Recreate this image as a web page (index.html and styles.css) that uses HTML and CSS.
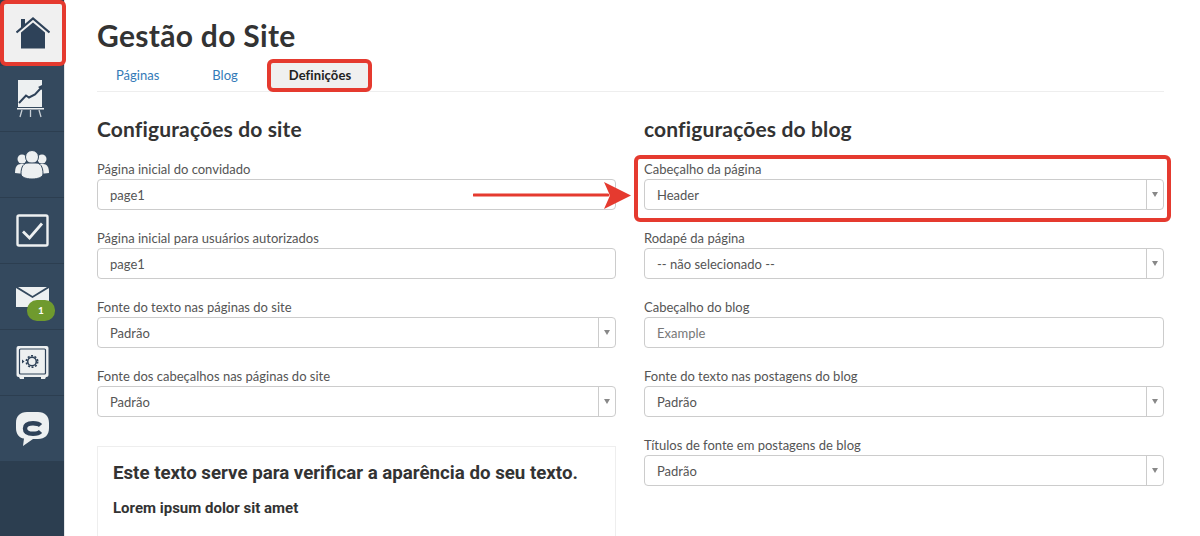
FILE: index.html
```html
<!DOCTYPE html>
<html lang="pt">
<head>
    <meta charset="UTF-8">
    <meta name="viewport" content="width=device-width, initial-scale=1.0">
    <title>Gestão do Site</title>
    <link rel="stylesheet" href="styles.css">
</head>
<body>

    <nav class="sidebar">
        <a class="nav-item nav-home">
            <svg width="34" height="32" viewBox="0 0 34 32">
                <path d="M5 2h4v6l-4 4z" fill="#2e4259"/>
                <path d="M0.5 15.500 17 1.500 33.500 15.500" fill="none" stroke="#2e4259" stroke-width="2.2"/>
                <path d="M5 15.500 17 5.500 29 15.500V31.500H5z" fill="#2e4259"/>
            </svg>
        </a>
        <a class="nav-item">
            <svg width="30" height="38" viewBox="0 0 30 38">
                <rect x="1" y="0" width="24" height="27" fill="#edf0f1"/>
                <path d="M2 23 9 15.500 12 17.500 18 14.500 24 8" fill="none" stroke="#2e4259" stroke-width="2"/>
                <path d="M21 7l4-2v5z" fill="#2e4259"/>
                <rect x="0" y="28" width="27" height="1.500" fill="#edf0f1"/>
                <path d="M5 30 3 37M13.500 30v7M22 30l2 7" stroke="#c9d0d6" stroke-width="1.3"/>
            </svg>
        </a>
        <a class="nav-item">
            <svg width="34" height="30" viewBox="0 0 34 30">
                <circle cx="7" cy="9" r="4.500" fill="#edf0f1"/>
                <circle cx="27" cy="9" r="4.500" fill="#edf0f1"/>
                <path d="M0 23c0-6 2-9 6-9h3v10z" fill="#edf0f1"/>
                <path d="M34 23c0-6-2-9-6-9h-3v10z" fill="#edf0f1"/>
                <circle cx="17" cy="7" r="6.500" fill="#edf0f1" stroke="#34495e"/>
                <path d="M6 24c0-8 3-11 7-11h8c4 0 7 3 7 11 0 3-5 5-11 5S6 27 6 24z" fill="#edf0f1" stroke="#34495e"/>
            </svg>
        </a>
        <a class="nav-item">
            <svg width="33" height="33" viewBox="0 0 33 33">
                <rect x="1.500" y="1.500" width="30" height="30" rx="1.500" fill="none" stroke="#edf0f1" stroke-width="2.4"/>
                <path d="M7 17.500 13.500 24 26 9.500" fill="none" stroke="#edf0f1" stroke-width="2.8"/>
            </svg>
        </a>
        <a class="nav-item">
            <svg width="33" height="20" viewBox="0 0 33 20">
                <path d="M0 1 16.500 11 33 1v19H0z" fill="#edf0f1"/>
                <path d="M2 0h29L16.500 9z" fill="#edf0f1"/>
            </svg>
            <span class="badge">1</span>
        </a>
        <a class="nav-item">
            <svg width="33" height="33" viewBox="0 0 33 33">
                <rect x="0.500" y="0" width="32" height="31" rx="2" fill="#edf0f1"/>
                <rect x="3.500" y="3" width="26" height="25" rx="1" fill="#edf0f1" stroke="#2e4259" stroke-width="1.2"/>
                <circle cx="16" cy="15.500" r="4.300" fill="none" stroke="#2e4259" stroke-width="1.6"/>
                <circle cx="16" cy="15.500" r="5.700" fill="none" stroke="#2e4259" stroke-width="1.6" stroke-dasharray="2 1.600"/>
                <path d="M6 13.500v4l2.500-2z" fill="#2e4259"/>
                <path d="M3 31h5v2H4zM25 31h5l-1 2h-4z" fill="#edf0f1"/>
            </svg>
        </a>
        <a class="nav-item">
            <svg width="33" height="34" viewBox="0 0 33 34">
                <path d="M11 0h11c7 0 11 4 11 11v5c0 7-4 11-11 11h-5l-10 7 1-7.500C3 26 0 22 0 16v-5C0 4 4 0 11 0z" fill="#edf0f1"/>
                <path d="M24.500 13.500C23 11.800 20.500 11.200 17 11.200 11.500 11.200 9 13 9 16.500S11.500 21.800 17 21.800C20.500 21.800 23 21.200 24.500 19.500" fill="none" stroke="#2e4259" stroke-width="4.400"/>
            </svg>
        </a>
    </nav>

    <main class="content">
        <h1>Gestão do Site</h1>
        <ul class="tabs">
            <li class="tab">Páginas</li>
            <li class="tab">Blog</li>
            <li class="tab tab-active">Definições</li>
        </ul>

        <div class="columns">
            <section class="column">
                <h2>Configurações do site</h2>
                <div class="field">
                    <label>Página inicial do convidado</label>
                    <div class="input">page1</div>
                </div>
                <div class="field">
                    <label>Página inicial para usuários autorizados</label>
                    <div class="input">page1</div>
                </div>
                <div class="field">
                    <label>Fonte do texto nas páginas do site</label>
                    <div class="input select">Padrão</div>
                </div>
                <div class="field">
                    <label>Fonte dos cabeçalhos nas páginas do site</label>
                    <div class="input select">Padrão</div>
                </div>
                <div class="preview">
                    <h3>Este texto serve para verificar a aparência do seu texto.</h3>
                    <h4>Lorem ipsum dolor sit amet</h4>
                </div>
            </section>

            <section class="column">
                <h2>configurações do blog</h2>
                <div class="field field-marked">
                    <label>Cabeçalho da página</label>
                    <div class="input select">Header</div>
                    <svg class="arrow" width="160" height="30" viewBox="0 0 160 30">
                        <path d="M1 15h134" stroke="#e53a2f" stroke-width="3" stroke-linecap="round"/>
                        <path d="M131 2 158 15.500 131 29l6-13.500z" fill="#e53a2f"/>
                    </svg>
                </div>
                <div class="field">
                    <label>Rodapé da página</label>
                    <div class="input select">-- não selecionado --</div>
                </div>
                <div class="field">
                    <label>Cabeçalho do blog</label>
                    <div class="input input-hint">Example</div>
                </div>
                <div class="field">
                    <label>Fonte do texto nas postagens do blog</label>
                    <div class="input select">Padrão</div>
                </div>
                <div class="field">
                    <label>Títulos de fonte em postagens de blog</label>
                    <div class="input select">Padrão</div>
                </div>
            </section>
        </div>
    </main>

</body>
</html>
```

FILE: styles.css
```css
html, body {
    height: 100%;
}
body {
    margin: 0;
    display: flex;
    overflow: hidden;
    background-color: #fff;
    color: #333;
    font-family: Lato, "Open Sans", sans-serif;
}

/* sidebar */
.sidebar {
    flex: 0 0 64px;
    min-width: 0;
    width: 64px;
    height: 536px;
    background-color: #2c3e50;
    border-right: 1px solid #e4e6e8;
}
.nav-item {
    display: flex;
    align-items: center;
    justify-content: center;
    position: relative;
    box-sizing: border-box;
    height: 66px;
    background-color: #34495e;
    border-bottom: 1px solid #2c3e50;
}
.nav-home {
    width: 66px;
    height: 66px;
    background-color: #f0f0f0;
    border: 4px solid #e53a2f;
    border-radius: 6px;
}
.badge {
    position: absolute;
    left: 27px;
    top: 36px;
    width: 28px;
    height: 21px;
    border-radius: 10px;
    background-color: #6f9a2e;
    color: #fff;
    font-size: 10px;
    font-weight: 700;
    line-height: 21px;
    text-align: center;
}

/* main area */
.content {
    flex: 1;
    min-width: 0;
    height: 536px;
    overflow: hidden;
    padding: 0 36px 0 32px;
}
h1 {
    margin: 19px 0 0;
    font-size: 30px;
    font-weight: 700;
    line-height: 33px;
    letter-spacing: 0.3px;
}
.tabs {
    display: flex;
    align-items: flex-end;
    height: 39px;
    margin: 0;
    padding: 0;
    list-style: none;
    border-bottom: 1px solid #eee;
}
.tab {
    padding: 0 19px;
    color: #337ab7;
    font-size: 13px;
    line-height: 31px;
}
.tab:nth-child(2) {
    margin: 0 10px 0 15px;
}
.tab-active {
    box-sizing: border-box;
    height: 33px;
    margin-bottom: -1px;
    padding: 0 17px 0 18px;
    line-height: 25px;
    background-color: #f0f0f0;
    border: 4px solid #e53a2f;
    border-radius: 6px;
    color: #222;
    font-weight: 700;
    letter-spacing: 0.1px;
}

.columns {
    display: grid;
    grid-template-columns: 519px 520px;
    gap: 28px;
}
h2 {
    margin: 23px 0 18px;
    font-size: 21px;
    font-weight: 700;
    line-height: 27px;
    letter-spacing: 0.15px;
}

/* form fields */
.field {
    position: relative;
    height: 69px;
}
label {
    display: block;
    height: 19px;
    color: #555;
    font-size: 13px;
    line-height: 18px;
}
.input {
    position: relative;
    box-sizing: border-box;
    height: 31px;
    padding: 0 12px;
    border: 1px solid #ccc;
    border-radius: 4px;
    background-color: #fff;
    color: #555;
    font-size: 13px;
    line-height: 31px;
}
.input-hint {
    color: #777;
}
.select::before {
    content: "";
    position: absolute;
    top: 0;
    right: 16px;
    bottom: 0;
    border-left: 1px solid #ccc;
}
.select::after {
    content: "";
    position: absolute;
    top: 12px;
    right: 5px;
    border-top: 5px solid #888;
    border-left: 3px solid transparent;
    border-right: 3px solid transparent;
}

/* red marks drawn over the page */
.field-marked::after {
    content: "";
    position: absolute;
    top: -5px;
    left: -10px;
    width: 537px;
    height: 67px;
    box-sizing: border-box;
    border: 4px solid #e53a2f;
    border-radius: 6px;
}
.arrow {
    position: absolute;
    top: 20px;
    left: -171px;
}

/* font preview */
.preview {
    height: 120px;
    margin-top: 10px;
    padding: 14px 15px 0;
    border: 1px solid #eee;
    font-family: Roboto, sans-serif;
}
h3 {
    margin: 0;
    font-size: 18.7px;
    font-weight: 700;
    line-height: 24px;
}
h4 {
    margin: 13px 0 0;
    font-size: 15px;
    font-weight: 700;
    line-height: 20px;
}
```
